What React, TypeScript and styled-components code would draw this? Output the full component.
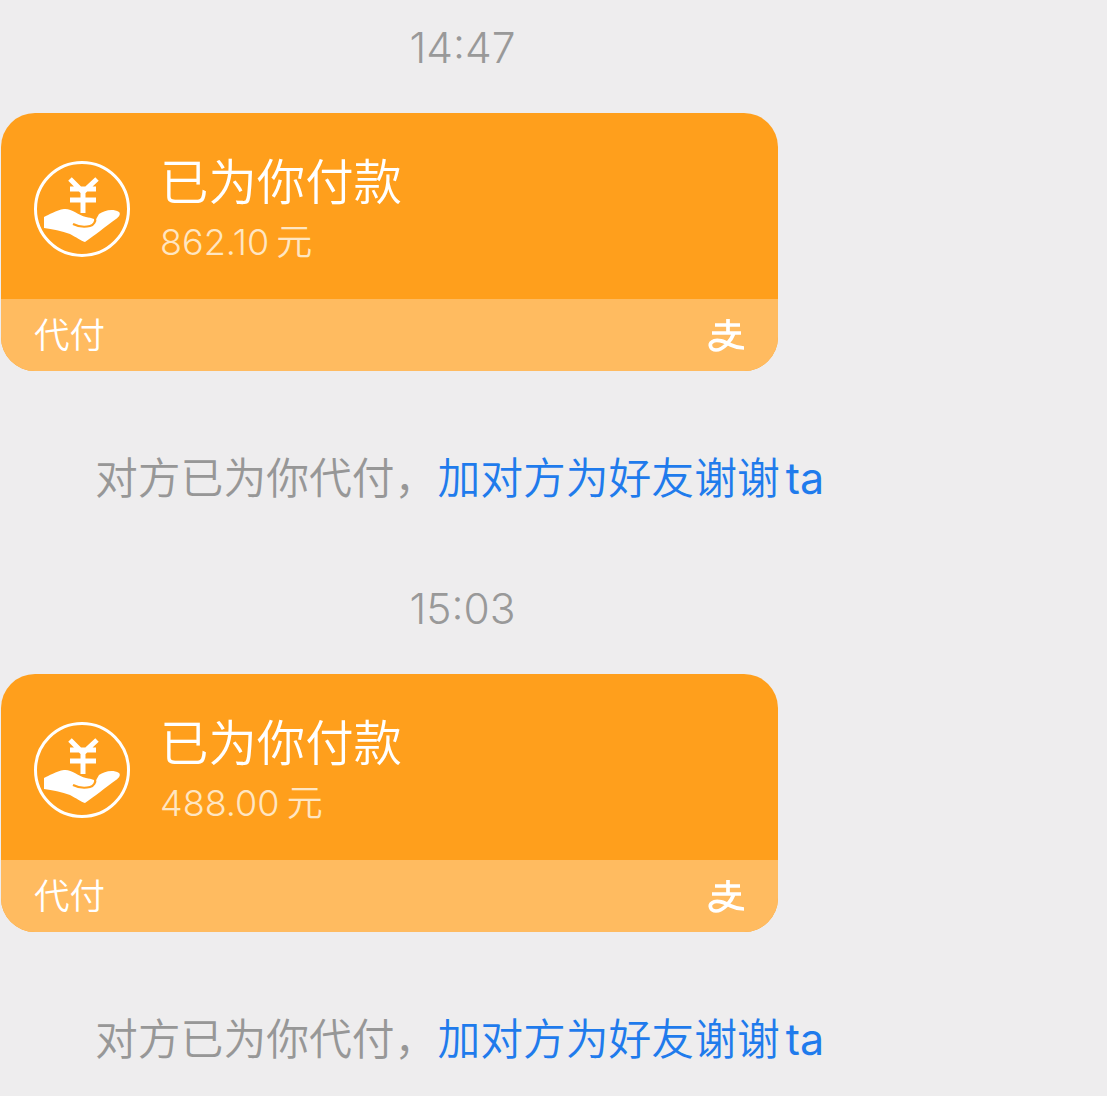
import styled, { createGlobalStyle } from "styled-components";

const GlobalStyle = createGlobalStyle`
    html, body {
        margin: 0;
        padding: 0;
        background-color: #eeedee;
    }
    body {
        font-family: "Inter", "Noto Sans CJK SC", sans-serif;
    }
`;

const Page = styled.div`
    width: 1107px;
    height: 1096px;
    overflow: hidden;
    background-color: #eeedee;
`;

const Block = styled.section`
    height: 561px;
    display: flex;
    flex-direction: column;
`;

const Time = styled.div`
    width: 925px;
    height: 96px;
    line-height: 96px;
    margin-bottom: 17px;
    text-align: center;
    font-size: 42.5px;
    font-weight: 350;
    color: #999;
`;

const Card = styled.div`
    width: 777px;
    height: 258px;
    margin-left: 1px;
    border-radius: 34px;
    overflow: hidden;
    display: flex;
    flex-direction: column;
    background-color: #ff9f1c;
`;

const CardBody = styled.div`
    height: 186px;
    padding-left: 33px;
    display: flex;
    align-items: flex-start;
    gap: 30px;
`;

const PayIcon = styled.svg`
    width: 96px;
    height: 96px;
    margin-top: 48px;
    flex-shrink: 0;
`;

const CardText = styled.div`
    display: flex;
    flex-direction: column;
`;

const Title = styled.div`
    margin-top: 40px;
    height: 60px;
    line-height: 60px;
    font-size: 48.4px;
    font-weight: 350;
    color: #fff;
`;

const Amount = styled.div`
    margin-top: 4px;
    height: 50px;
    line-height: 50px;
    font-size: 36px;
    font-weight: 350;
    word-spacing: -3px;
    color: #ffe6c2;
`;

const CardFooter = styled.div`
    height: 72px;
    padding: 0 32px 5px 33px;
    box-sizing: border-box;
    display: flex;
    align-items: center;
    justify-content: space-between;
    background-color: #ffbb60;
`;

const FooterLabel = styled.span`
    font-size: 35.5px;
    font-weight: 350;
    color: #fff;
`;

const PayLogo = styled.svg`
    width: 40px;
    height: 36px;
    margin-top: 5px;
    flex-shrink: 0;
`;

const Notice = styled.p`
    margin: 59px 0 0 95px;
    height: 96px;
    line-height: 96px;
    font-size: 42.8px;
    font-weight: 350;
    color: #979797;
    white-space: nowrap;
`;

const NoticeLink = styled.span`
    color: #1f7bec;
`;

const Latin = styled.span`
    font-size: 43px;
    font-weight: 400;
    margin-left: 6px;
`;

function HandIcon() {
    return (
        <PayIcon viewBox="0 0 96 96">
            <circle cx="48" cy="48" r="46.5" fill="none" stroke="#fff" strokeWidth="3" />
            <path
                d="M36 18 L49 31 L63 18 M36 28 H62 M36 39 H62 M49 30 V52"
                fill="none"
                stroke="#fff"
                strokeWidth="5"
            />
            <path
                d="M10 56 C15 54 22 49 30 48 C37 47 44 54 52 56 C58 57 62 58 61 60 L65 53 C70 50 78 47 85 51 C87 53 85 56 82 58 C72 65 60 75 51 81 C47 80 42 76 36 73 C28 70 18 68 10 67 Z"
                fill="#fff"
            />
            <path
                d="M39 63 C45 66 52 66 56 65 C60 64 62 60 61 57"
                fill="none"
                stroke="#ff9f1c"
                strokeWidth="2.2"
            />
        </PayIcon>
    );
}

function AlipayLogo() {
    return (
        <PayLogo viewBox="0 0 40 36">
            <path
                d="M9 8 H34 M22 2 V16 M6 16 H35 M28 16 C25 24 17 33 10 33 C4 33 3 27 6 25 C11 21 19 25 25 28 C29 30 33 31 38 31"
                fill="none"
                stroke="#fff"
                strokeWidth="3.7"
            />
        </PayLogo>
    );
}

interface PaymentProps {
    time: string;
    amount: string;
}

function Payment({ time, amount }: PaymentProps) {
    return (
        <Block>
            <Time>{time}</Time>
            <Card>
                <CardBody>
                    <HandIcon />
                    <CardText>
                        <Title>已为你付款</Title>
                        <Amount>{amount} 元</Amount>
                    </CardText>
                </CardBody>
                <CardFooter>
                    <FooterLabel>代付</FooterLabel>
                    <AlipayLogo />
                </CardFooter>
            </Card>
            <Notice>
                对方已为你代付，
                <NoticeLink>
                    加对方为好友谢谢<Latin>ta</Latin>
                </NoticeLink>
            </Notice>
        </Block>
    );
}

export default function App() {
    return (
        <Page>
            <GlobalStyle />
            <Payment time="14:47" amount="862.10" />
            <Payment time="15:03" amount="488.00" />
        </Page>
    );
}
